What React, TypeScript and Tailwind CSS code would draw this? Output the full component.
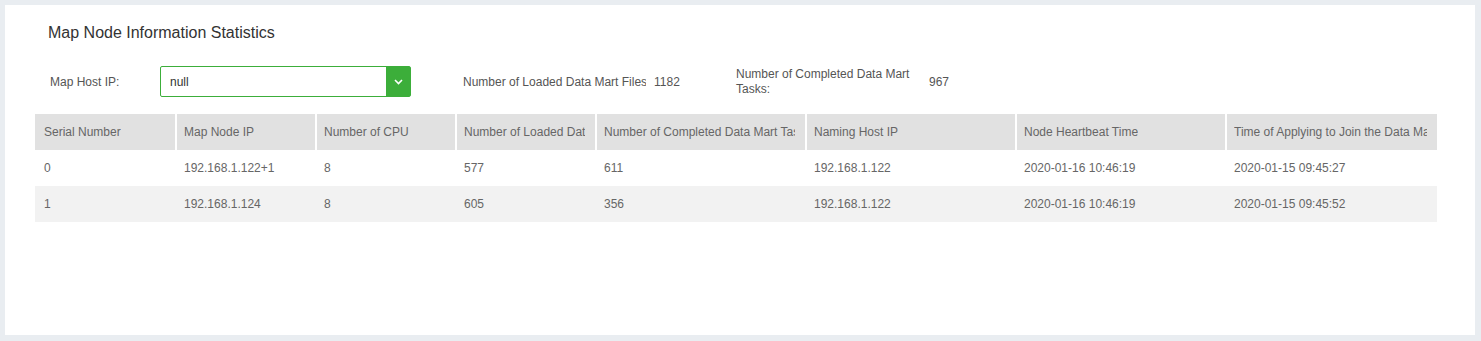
import React from 'react'

type Row = {
  serial: string
  nodeIp: string
  cpu: string
  loaded: string
  completed: string
  namingIp: string
  heartbeat: string
  joined: string
}

const columns: { title: string; width: string }[] = [
  { title: 'Serial Number', width: 'w-[140px]' },
  { title: 'Map Node IP', width: 'w-[140px]' },
  { title: 'Number of CPU', width: 'w-[140px]' },
  { title: 'Number of Loaded Data Mart Files', width: 'w-[140px]' },
  { title: 'Number of Completed Data Mart Tasks', width: 'w-[210px]' },
  { title: 'Naming Host IP', width: 'w-[210px]' },
  { title: 'Node Heartbeat Time', width: 'w-[210px]' },
  { title: 'Time of Applying to Join the Data Mart', width: 'w-[212px]' },
]

const rows: Row[] = [
  {
    serial: '0',
    nodeIp: '192.168.1.122+1',
    cpu: '8',
    loaded: '577',
    completed: '611',
    namingIp: '192.168.1.122',
    heartbeat: '2020-01-16 10:46:19',
    joined: '2020-01-15 09:45:27',
  },
  {
    serial: '1',
    nodeIp: '192.168.1.124',
    cpu: '8',
    loaded: '605',
    completed: '356',
    namingIp: '192.168.1.122',
    heartbeat: '2020-01-16 10:46:19',
    joined: '2020-01-15 09:45:52',
  },
]

const HeadCell = ({ width, first, children }: { width: string; first?: boolean; children: React.ReactNode }) => (
  <div
    className={`${width} shrink-0 flex items-center pr-[10px] ${first ? 'pl-[9px]' : 'border-l-2 border-white pl-[7px]'}`}
  >
    <span className="block min-w-0 overflow-hidden whitespace-nowrap">{children}</span>
  </div>
)

export default function App() {
  return (
    <div
      className="h-[341px] w-[1481px] bg-[#e9edf1] pt-[5px] pl-[5px] pr-[6px] pb-[6px] text-[#666]"
      style={{ fontFamily: '"Liberation Sans", Arial, sans-serif' }}
    >
      <div className="h-full bg-white pl-[30px] pt-[16px]">
        <h1 className="ml-[13px] h-[24px] text-[16px] leading-[24px] font-normal text-[#333]">
          Map Node Information Statistics
        </h1>

        <div className="mt-[21px] flex h-[31px] items-center text-[12px] text-[#555]">
          <label className="ml-[15px] w-[110px]">Map Host IP:</label>
          <div className="flex h-[31px] w-[251px] items-stretch rounded-[2px] border border-[#3cae3a]">
            <span className="flex flex-1 items-center pl-[9px] text-[#333]">null</span>
            <span className="flex w-[24px] items-center justify-center bg-[#3cae3a]">
              <svg width="9" height="6" viewBox="0 0 9 6" fill="none">
                <path d="M1 1l3.5 3.5L8 1" stroke="white" strokeWidth="1.6" />
              </svg>
            </span>
          </div>

          <span className="ml-[52px] w-[183px] overflow-hidden whitespace-nowrap">
            Number of Loaded Data Mart Files
          </span>
          <span className="ml-[8px] w-[82px]">1182</span>

          <span className="w-[185px] leading-[15px]">Number of Completed Data Mart Tasks:</span>
          <span className="ml-[8px]">967</span>
        </div>

        <div className="mt-[17px] w-[1402px] text-[12px]">
          <div className="flex h-[36px] bg-[#e1e1e1]">
            {columns.map((c, i) => (
              <HeadCell key={c.title} width={c.width} first={i === 0}>
                {c.title}
              </HeadCell>
            ))}
          </div>
          {rows.map((r, ri) => {
            const vals = [r.serial, r.nodeIp, r.cpu, r.loaded, r.completed, r.namingIp, r.heartbeat, r.joined]
            return (
              <div key={r.serial} className={`flex h-[36px] ${ri % 2 === 1 ? 'bg-[#f2f2f2]' : 'bg-white'}`}>
                {vals.map((v, i) => (
                  <div key={i} className={`${columns[i].width} shrink-0 flex items-center pl-[9px]`}>
                    {v}
                  </div>
                ))}
              </div>
            )
          })}
        </div>
      </div>
    </div>
  )
}
